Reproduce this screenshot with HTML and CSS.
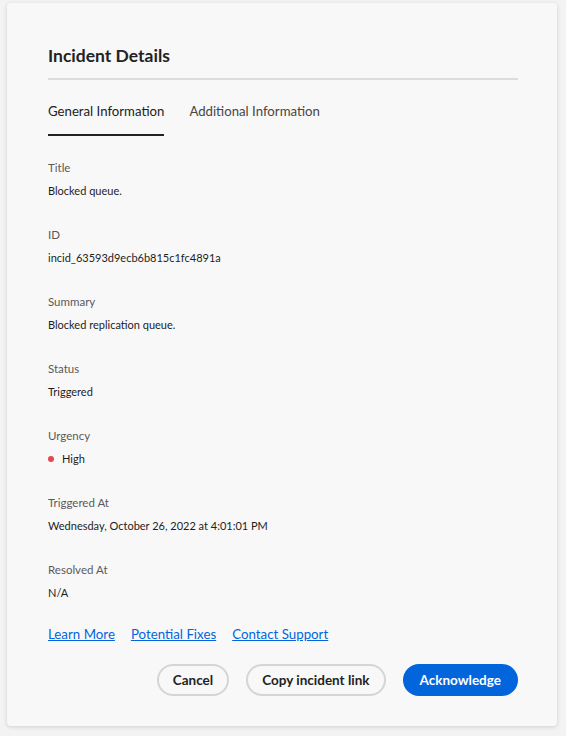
FILE: index.html
```html
<!DOCTYPE html>
<html lang="en">
<head>
<meta charset="utf-8">
<title>Incident Details</title>
<link rel="stylesheet" href="styles.css">
</head>
<body>
<section class="dialog">
  <h2 class="heading">Incident Details</h2>
  <div class="divider"></div>
  <div class="tabs">
    <div class="tab selected">General Information</div>
    <div class="tab">Additional Information</div>
  </div>
  <dl class="fields">
    <div class="field"><dt>Title</dt><dd>Blocked queue.</dd></div>
    <div class="field"><dt>ID</dt><dd>incid_63593d9ecb6b815c1fc4891a</dd></div>
    <div class="field"><dt>Summary</dt><dd>Blocked replication queue.</dd></div>
    <div class="field"><dt>Status</dt><dd>Triggered</dd></div>
    <div class="field"><dt>Urgency</dt><dd class="urgency"><span class="dot"></span>High</dd></div>
    <div class="field"><dt>Triggered At</dt><dd>Wednesday, October 26, 2022 at 4:01:01 PM</dd></div>
    <div class="field"><dt>Resolved At</dt><dd>N/A</dd></div>
  </dl>
  <div class="links">
    <a href="#">Learn More</a>
    <a href="#">Potential Fixes</a>
    <a href="#">Contact Support</a>
  </div>
  <div class="buttons">
    <button class="btn secondary">Cancel</button>
    <button class="btn secondary">Copy incident link</button>
    <button class="btn primary">Acknowledge</button>
  </div>
</section>
</body>
</html>
```
FILE: styles.css
```css
html, body {
  margin: 0;
  padding: 0;
}
body {
  background: #f3f3f3;
  font-family: Lato, "Noto Sans", sans-serif;
  color: #222;
  width: 566px;
  height: 736px;
  overflow: hidden;
}
.dialog {
  box-sizing: border-box;
  margin: 3px 0 0 7px;
  width: 550px;
  height: 723px;
  background: #f8f8f8;
  border-radius: 4px;
  box-shadow: 0 1px 4px rgba(0,0,0,0.15);
  padding: 41px 39px 0 41px;
  display: flex;
  flex-direction: column;
}
.heading {
  margin: 0;
  font-size: 17.5px;
  line-height: 24px;
  font-weight: 700;
  color: #222;
}
.divider {
  height: 2px;
  background: #dcdcdc;
  margin-top: 10px;
}
.tabs {
  display: flex;
  gap: 25px;
  margin-top: 21px;
}
.tab {
  font-size: 13.2px;
  line-height: 20px;
  padding-bottom: 13px;
  border-bottom: 2px solid transparent;
  color: #464646;
}
.tab.selected {
  color: #222;
  border-bottom-color: #222;
}
.fields {
  margin: 23px 0 0;
  display: flex;
  flex-direction: column;
  gap: 26px;
}
.field dt {
  font-size: 11.5px;
  line-height: 18px;
  color: #5a5a5a;
}
.field dd {
  margin: 5px 0 0;
  font-size: 11px;
  line-height: 18px;
  color: #1d1d1d;
}
.urgency {
  display: flex;
  align-items: center;
}
.dot {
  width: 6px;
  height: 6px;
  border-radius: 50%;
  background: #e34850;
  margin: 0 8px 0 0;
}
.links {
  display: flex;
  gap: 16px;
  margin-top: 22px;
  font-size: 13.3px;
  line-height: 20px;
}
.links a {
  color: #0265dc;
  text-decoration: underline;
}
.buttons {
  display: flex;
  justify-content: flex-end;
  gap: 17px;
  margin-top: 20px;
}
.btn {
  font-family: Lato, "Noto Sans", sans-serif;
  height: 32px;
  border-radius: 16px;
  font-size: 13.5px;
  font-weight: 700;
  padding: 0 14px;
  box-sizing: border-box;
}
.btn.secondary {
  background: transparent;
  border: 2px solid #d5d5d5;
  color: #222;
}
.btn.primary {
  background: #0265dc;
  border: 2px solid #0265dc;
  color: #fff;
  padding: 0 15px;
}
```
